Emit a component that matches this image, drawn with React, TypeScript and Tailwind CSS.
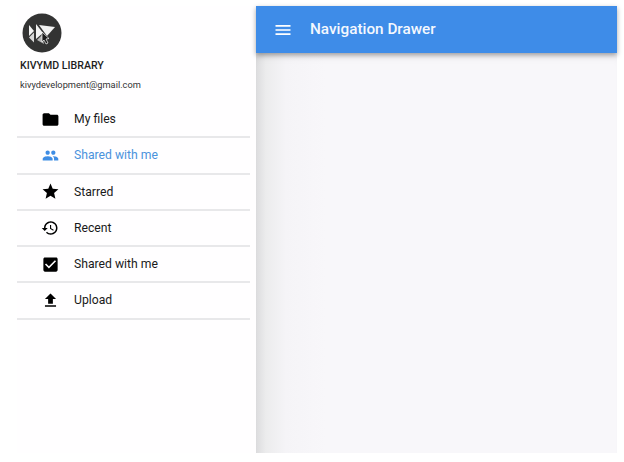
const font = { fontFamily: "Roboto, sans-serif" };

const items = [
  { label: "My files", size: 19, d: "M10 4H4c-1.1 0-2 .9-2 2v12c0 1.1.9 2 2 2h16c1.1 0 2-.9 2-2V8c0-1.1-.9-2-2-2h-8l-2-2z" },
  {
    label: "Shared with me",
    active: true,
    size: 17,
    d: "M16 11c1.66 0 2.99-1.34 2.99-3S17.66 5 16 5c-1.66 0-3 1.34-3 3s1.34 3 3 3zm-8 0c1.66 0 2.99-1.34 2.99-3S9.66 5 8 5C6.34 5 5 6.34 5 8s1.34 3 3 3zm0 2c-2.33 0-7 1.17-7 3.5V19h14v-2.5c0-2.33-4.67-3.5-7-3.5zm8 0c-.29 0-.62.02-.97.05 1.16.84 1.97 1.97 1.97 3.45V19h6v-2.5c0-2.33-4.67-3.5-7-3.5z",
  },
  { label: "Starred", size: 19, d: "M12 17.27L18.18 21l-1.64-7.03L22 9.24l-7.19-.61L12 2 9.19 8.63 2 9.24l5.46 4.73L5.82 21z" },
  {
    label: "Recent",
    size: 18,
    d: "M13 3c-4.97 0-9 4.03-9 9H1l3.89 3.89.07.14L9 12H6c0-3.87 3.13-7 7-7s7 3.13 7 7-3.13 7-7 7c-1.93 0-3.68-.79-4.94-2.06l-1.42 1.42C8.27 19.99 10.51 21 13 21c4.97 0 9-4.03 9-9s-4.03-9-9-9zm-1 5v5l4.28 2.54.72-1.21-3.5-2.08V8H12z",
  },
  {
    label: "Shared with me",
    size: 19,
    d: "M19 3H5c-1.11 0-2 .9-2 2v14c0 1.1.89 2 2 2h14c1.11 0 2-.9 2-2V5c0-1.1-.89-2-2-2zm-9 14l-5-5 1.41-1.41L10 14.17l7.59-7.59L19 8l-9 9z",
  },
  { label: "Upload", size: 19, d: "M9 16h6v-6h4l-7-7-7 7h4v6zm-4 2h14v2H5z" },
];

function KivyLogo() {
  return (
    <svg width="40" height="40" viewBox="0 0 40 40">
      <circle cx="20" cy="20" r="19.5" fill="#333333" />
      <path d="M7 12l5 6-5 5z" fill="#f2f2f2" />
      <path d="M7 24.5l5-5v10z" fill="#d8d8d8" />
      <path d="M14 11l7 9-7 6z" fill="#f2f2f2" />
      <path d="M15 27l5-5 2 9z" fill="#b5b5b5" />
      <path d="M17 12l16 2-8 9z" fill="#f2f2f2" />
      <path d="M20 19l7 6.5-3 .5 2 4-2 1-2-4-2 2z" fill="#1c1c1c" stroke="#ffffff" strokeWidth="0.7" />
    </svg>
  );
}

export default function App() {
  return (
    <div className="h-[462px] w-[624px] overflow-hidden bg-white pl-[17px] pt-[6px]" style={font}>
      <div className="flex h-[447px] w-[600px]">
        <aside className="w-[239px] shrink-0 bg-[#fffeff] pr-[6px]">
          <div className="pl-[5px] pt-[7px]">
            <KivyLogo />
          </div>
          <div className="pl-[3px] pt-[5px] text-[10.6px] font-medium leading-[16px] text-[#1d1d1d]">KIVYMD LIBRARY</div>
          <div className="pl-[3px] pt-[3px] text-[9.25px] leading-[16px] text-[#333333]">kivydevelopment@gmail.com</div>
          <ul className="mt-[9px]">
            {items.map((item, i) => (
              <li
                key={i}
                className={
                  item.active
                    ? "flex h-[36.3px] items-center border-b-2 border-[#e8e8ea] text-[#4b92dc]"
                    : "flex h-[36.3px] items-center border-b-2 border-[#e8e8ea] text-[#1a1a1a]"
                }
              >
                <span className="flex w-[57px] pl-[21px]">
                  <span className="flex w-[24px] justify-center">
                    <svg
                      width={item.size}
                      height={item.size}
                      viewBox="0 0 24 24"
                      fill="currentColor"
                      className={item.active ? "text-[#3f8de4]" : "text-black"}
                    >
                      <path d={item.d} />
                    </svg>
                  </span>
                </span>
                <span className="text-[12.2px]">{item.label}</span>
              </li>
            ))}
          </ul>
        </aside>
        <div className="flex flex-1 flex-col">
          <header className="relative z-10 flex h-[47px] shrink-0 items-center bg-[#3e8ce8] shadow-[0_2px_5px_rgba(0,0,0,0.35)]">
            <svg width="20" height="20" viewBox="0 0 24 24" fill="white" className="ml-[17px]">
              <path d="M3 18h18v-2H3v2zm0-5h18v-2H3v2zm0-7v2h18V6H3z" />
            </svg>
            <span className="ml-[17px] text-[15.3px] font-medium text-[#f4f8fe]">Navigation Drawer</span>
          </header>
          <main className="flex-1 bg-[linear-gradient(90deg,#dcdcde_0px,#ececed_10px,#f5f4f7_30px,#f8f7fa_70px)] shadow-[inset_0_10px_10px_-6px_rgba(0,0,0,0.06)]" />
        </div>
      </div>
    </div>
  );
}
